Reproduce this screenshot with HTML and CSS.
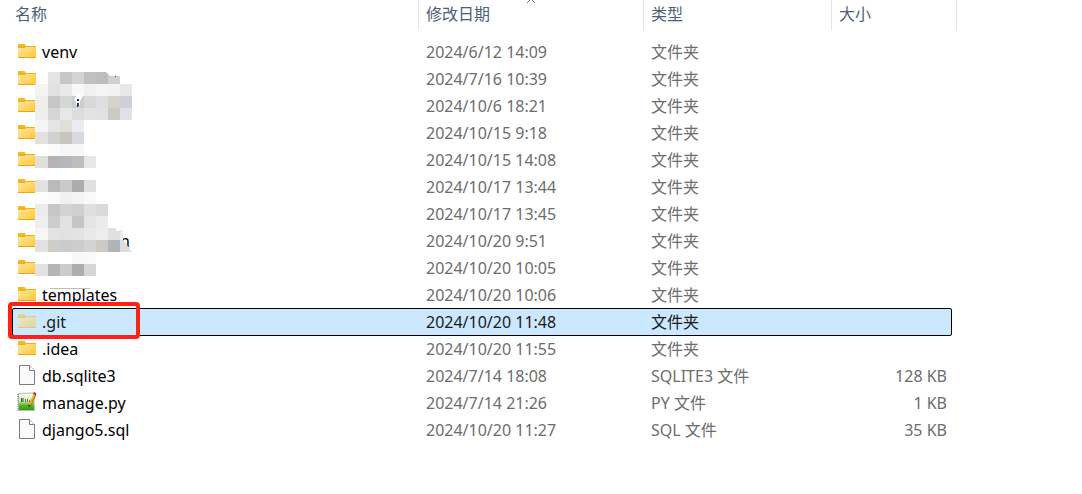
FILE: index.html
```
<!DOCTYPE html>
<html lang="zh-CN">

<head>
    <meta charset="UTF-8">
    <meta name="viewport" content="width=device-width, initial-scale=1.0">
    <title>文件列表</title>
    <link rel="stylesheet" href="styles.css">
</head>

<body>
    <!-- 图标 -->
    <svg class="sprite" aria-hidden="true">
        <defs>
            <linearGradient id="folderFill" x1="0" y1="0" x2="1" y2="1">
                <stop offset="0" stop-color="#ffe9a8" />
                <stop offset="1" stop-color="#ffc62e" />
            </linearGradient>
            <linearGradient id="leafFill" x1="0" y1="0" x2="0" y2="1">
                <stop offset="0" stop-color="#ffffff" />
                <stop offset="0.45" stop-color="#d3efb4" />
                <stop offset="0.7" stop-color="#52b81c" />
                <stop offset="1" stop-color="#2f9a0c" />
            </linearGradient>
        </defs>
        <symbol id="folder" viewBox="0 0 18 20">
            <path d="M0 3h6.500l1 1v3H0z" fill="#fbb917" />
            <path d="M0 6h7l1.500-1H18v12H0z" fill="url(#folderFill)" />
            <path d="M0 5.500h7l1-0.500h10v1H8l-1 1H0z" fill="#f2ae17" />
            <path d="M0 16h18v1H0z" fill="#e9a51d" />
        </symbol>
        <symbol id="file" viewBox="0 0 18 20">
            <path d="M1.500 0.500h10l5 5v14h-15z" fill="#fafafa" stroke="#7b7b7b" />
            <path d="M11.500 0.500v5h5" fill="#ffffff" stroke="#7b7b7b" />
        </symbol>
        <symbol id="script" viewBox="0 0 20 20">
            <path d="M1.500 1.500l15-0.500 1 17.500h-16z" fill="url(#leafFill)" stroke="#b4bcae" />
            <path d="M1 2v17" stroke="#777" fill="none" stroke-dasharray="1 1" />
            <path d="M4.500 6v4M6 6v4" stroke="#454c42" fill="none" />
            <path d="M8.500 7v3M10.500 7v3M12.500 8v2" stroke="#6d7768" fill="none" />
            <path d="M18 2l-5 11" stroke="#f0a52a" stroke-width="2.500" fill="none" />
            <path d="M19 2.500l-5 11" stroke="#b76a18" fill="none" />
            <path d="M16.500 1l2.500 1" stroke="#a33c2c" stroke-width="2" />
            <path d="M11.500 12.500l2.500 1-2.500 2z" fill="#4b3a22" />
        </symbol>
    </svg>

    <div class="file-list">
        <table>
            <colgroup>
                <col class="col-name">
                <col class="col-date">
                <col class="col-type">
                <col class="col-size">
                <col class="col-end">
            </colgroup>
            <thead>
                <tr>
                    <th><button type="button" class="first">名称</button></th>
                    <th><button type="button">修改日期<svg class="sort" viewBox="0 0 10 4"><path d="M1 3l4-4 4 4" /></svg></button></th>
                    <th><button type="button">类型</button></th>
                    <th colspan="2"><button type="button" class="last">大小</button></th>
                </tr>
            </thead>
            <tbody id="files"></tbody>
        </table>
        <svg class="mosaic" id="mosaic" viewBox="0 0 98 220" aria-hidden="true"></svg>
    </div>

    <script src="files.js"></script>
</body>

</html>
```
FILE: styles.css
```
body {
    margin: 0;
    background-color: #fff;
    color: #6d6d6d;
    font-family: "Noto Sans", "Noto Sans CJK SC", sans-serif;
    font-size: 16px;
}

.sprite {
    position: absolute;
    width: 0;
    height: 0;
}

.file-list {
    position: relative;
    padding-left: 12px;
}

table {
    table-layout: fixed;
    width: 945px;
    border-collapse: separate;
    border-spacing: 0;
}

.col-name {
    width: 406px;
}

.col-date {
    width: 225px;
}

.col-type {
    width: 188px;
}

.col-size {
    width: 121px;
}

.col-end {
    width: 5px;
}

/* Encabezado */
th {
    height: 38px;
    padding: 0;
    font-weight: normal;
    vertical-align: top;
}

th button {
    position: relative;
    display: block;
    width: 100%;
    height: 30px;
    padding: 0 7px 2px;
    border: 0;
    border-left: 1px solid #e5e5e5;
    background: none;
    color: #4c607a;
    font: inherit;
    line-height: 28px;
    text-align: left;
}

th .first {
    padding-left: 3px;
    border-left: 0;
}

th .last {
    border-right: 1px solid #e5e5e5;
}

.sort {
    position: absolute;
    top: 0;
    left: 50%;
    width: 10px;
    height: 4px;
    margin-left: -5px;
    fill: none;
    stroke: #777;
}

/* Filas */
tbody tr {
    position: relative;
}

td {
    height: 25px;
    padding: 2px 0 0 8px;
    line-height: 25px;
    white-space: nowrap;
}

td.name {
    position: relative;
    padding-left: 6px;
    color: #000;
}

td.size {
    padding-right: 5px;
    padding-left: 0;
    text-align: right;
}

td.end {
    padding-left: 0;
}

.entry {
    display: flex;
    align-items: center;
    gap: 6px;
    height: 25px;
}

.entry svg {
    flex: none;
    width: 18px;
    height: 20px;
    margin-bottom: 3px;
}

.entry .script {
    width: 20px;
    margin-right: -1px;
    margin-left: -1px;
}

.entry .tail {
    padding-left: 78px;
}

.selected td {
    background-color: #cce8ff;
    color: #1a1a1a;
}

.selected td.end {
    background: none;
}

.selected::after {
    content: "";
    position: absolute;
    top: 0;
    right: 5px;
    bottom: -1px;
    left: 0;
    border: 1px solid #000;
    border-radius: 2px;
}

.selected .entry svg {
    opacity: 0.5;
}

.mark {
    position: absolute;
    z-index: 2;
    top: -6px;
    left: -4px;
    box-sizing: border-box;
    width: 132px;
    height: 37px;
    border: 4px solid #ff2116;
    border-radius: 4px;
}

.mosaic {
    position: absolute;
    top: 72px;
    left: 35px;
    width: 98px;
    height: 220px;
}
```
FILE: files.js
```
const files = [
    ["folder", "venv", "2024/6/12 14:09", "文件夹", ""],
    ["folder", "", "2024/7/16 10:39", "文件夹", ""],
    ["folder", "", "2024/10/6 18:21", "文件夹", ""],
    ["folder", "", "2024/10/15 9:18", "文件夹", ""],
    ["folder", "", "2024/10/15 14:08", "文件夹", ""],
    ["folder", "", "2024/10/17 13:44", "文件夹", ""],
    ["folder", "", "2024/10/17 13:45", "文件夹", ""],
    ["folder", "n", "2024/10/20 9:51", "文件夹", "", "tail"],
    ["folder", "", "2024/10/20 10:05", "文件夹", ""],
    ["folder", "templates", "2024/10/20 10:06", "文件夹", ""],
    ["folder", ".git", "2024/10/20 11:48", "文件夹", "", "selected"],
    ["folder", ".idea", "2024/10/20 11:55", "文件夹", ""],
    ["file", "db.sqlite3", "2024/7/14 18:08", "SQLITE3 文件", "128 KB"],
    ["script", "manage.py", "2024/7/14 21:26", "PY 文件", "1 KB"],
    ["file", "django5.sql", "2024/10/20 11:27", "SQL 文件", "35 KB"]
];

document.getElementById("files").innerHTML = files.map(([icon, name, date, type, size, state]) => `
    <tr class="${state === "selected" ? "selected" : ""}">
        <td class="name">
            <div class="entry">
                <svg class="${icon}"><use href="#${icon}" /></svg>
                <span class="${state === "tail" ? "tail" : ""}">${name}</span>
            </div>
            ${state === "selected" ? '<div class="mark"></div>' : ""}
        </td>
        <td>${date}</td>
        <td>${type}</td>
        <td class="size">${size}</td>
        <td class="end"></td>
    </tr>
`).join("");

// bloques del mosaico: y, primera columna, colores
const blocks = [
    [0, 1, "#e4e4e3 #c8c7c6 #d4d4d3 #bfc0c2 #bdbdbc #cfd0d0"],
    [12, 0, "#f4f4f4 #e1e1e2 #e7e9ec #f7f7f7 #f0f0f0 #f5f5f5 #f2f2f2 #e7e7e8"],
    [24, 0, "#efeeed #c5c6c7 #d5d7d7 #cdcdcd #d7d8da #dfdfe0 #d6d2ce #cbd1d7"],
    [36, 0, "#eeeeed #d5d5d5 #e7e7e7 #dddddd #e3e3e3 #e1e1e1 #cac9c5 #dee2e6"],
    [48, 0, "#f4f5f5 #e4e4e2 #dfded9 #e9edf1"],
    [60, 0, "#e1e1e0 #d1d1d1 #c9c4bf #d6dbe0"],
    [72, 0, "#ffffff #fdfbf9 #f4f6f8 #f7f7f7"],
    [84, 0, "#dfdfdb #b8b3b0 #b3b8bd #bdbdbb #e6e7e9"],
    [108, 0, "#e1e1e0 #bbbab8 #c9cacb #acacaa #dfe0e1"],
    [120, 0, "#fcfcfc #faf9f7 #f0f0f0 #f4f4f4 #f8faf9"],
    [132, 0, "#ececeb #c6c6c4 #d3d3d3 #d0d0d0 #dde0df #dadada"],
    [144, 0, "#eeefee #cccccb #e2e2e2 #c5c5c3 #e3e5e4 #ebebeb"],
    [156, 0, "#f6f6f5 #e3e3e2 #dee2e5 #e3e3e3 #e8e9eb #eeeeef #dfe0e2"],
    [168, 0, "#e1e1e1 #d0cdc9 #c9cccf #cdcdcd #d2d3d5 #cdc9c5 #aeb4b7"],
    [180, 0, "#ffffff #ffffff #ffffff #f8f8f8 #f9f9f9"],
    [192, 0, "#e1e1e1 #b6b5b3 #c9cccc #adadab #d5d7d6"]
];

let shapes = "";
blocks.forEach(([y, first, colors]) => {
    colors.split(" ").forEach((color, i) => {
        const column = first + i;
        const x = column ? column * 12 + 1 : 0;
        shapes += `<rect x="${x}" y="${y}" width="${column ? 12 : 13}" height="12" fill="${color}" />`;
    });
});

// restos que quedan entre los bloques
shapes += `
    <path d="M71 0h14v4H75z" fill="#fff" />
    <path d="M80 4h1v1h-1z" fill="#17548b" />
    <path d="M43 21l5 3-3 5v4h-4v-4l-2-1z" fill="#fff" />
    <path d="M42 27h2v2h-2zM42 31h2v2l-1 2h-1z" fill="#17365f" />
    <path d="M81 156h4v3h-4z" fill="#fff" />
    <path d="M85 158h3v10h-3z" fill="#ececec" />
    <path d="M85 168h3l9 12H85z" fill="#dcdddd" />
    <path d="M15 215h42v1H15z" fill="#fff" />
    <path d="M15 216h40v1H15z" fill="#bdbdbd" />
`;
document.getElementById("mosaic").innerHTML = shapes;
```
